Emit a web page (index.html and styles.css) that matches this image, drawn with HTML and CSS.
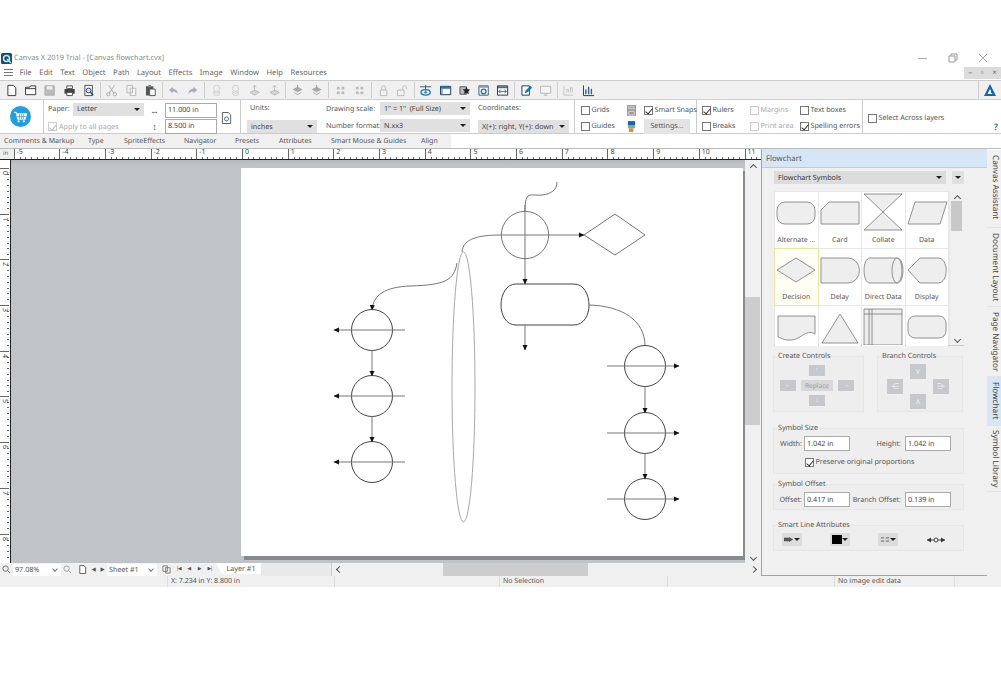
FILE: index.html
```html
<!DOCTYPE html>
<html lang="en">
<head>
<meta charset="utf-8">
<title>Canvas X 2019 Trial</title>
<link rel="stylesheet" href="styles.css">
</head>
<body>
<svg class="sprites" aria-hidden="true">
  <symbol id="i-new" viewBox="0 0 14 14"><path d="M3 1.500H9L11.500 4V12.500H3Z" fill="#fff" stroke="#333"/></symbol>
  <symbol id="i-open" viewBox="0 0 14 14"><path d="M1.500 3.500H6L7 2H12.500V11.500H1.500Z" fill="#fff" stroke="#333"/><path d="M1.500 5H12.500" stroke="#333"/></symbol>
  <symbol id="i-save" viewBox="0 0 14 14"><path d="M2 2H12V12H2Z" fill="#bbb" stroke="#aaa"/><path d="M4 2.500H10V6H4Z" fill="#eee"/></symbol>
  <symbol id="i-print" viewBox="0 0 14 14"><path d="M1.500 5.500H12.500V10.500H1.500Z" fill="#444"/><path d="M4 2H10V5H4ZM4 9H10V12.500H4Z" fill="#fff" stroke="#444"/></symbol>
  <symbol id="i-prev" viewBox="0 0 14 14"><path d="M3 1.500H11V12.500H3Z" fill="#fff" stroke="#444"/><circle cx="7" cy="7" r="2.600" fill="#cfe0f2" stroke="#247"/><path d="M9 9L12 12" stroke="#247" stroke-width="1.500"/></symbol>
  <symbol id="i-cut" viewBox="0 0 14 14"><path d="M4 1.500L9.500 10M10 1.500L4.500 10" stroke="#aaa" fill="none"/><circle cx="3.500" cy="11" r="1.800" fill="none" stroke="#aaa"/><circle cx="10.500" cy="11" r="1.800" fill="none" stroke="#aaa"/></symbol>
  <symbol id="i-copy" viewBox="0 0 14 14"><path d="M2 1.500H8V9.500H2ZM5.500 4.500H11.500V12.500H5.500Z" fill="#f4f4f4" stroke="#b5b5b5"/></symbol>
  <symbol id="i-paste" viewBox="0 0 14 14"><path d="M2 2.500H10V12.500H2Z" fill="#555"/><path d="M4.500 1H7.500V3.500H4.500Z" fill="#888"/><path d="M6 5.500H12V12.500H6Z" fill="#fff" stroke="#456"/></symbol>
  <symbol id="i-undo" viewBox="0 0 14 14"><path d="M6 3L2 6.500L6 10V8C9 8 10.500 9 11.500 11C11.500 7.500 9.500 5 6 5Z" fill="#aab"/></symbol>
  <symbol id="i-redo" viewBox="0 0 14 14"><path d="M8 3L12 6.500L8 10V8C5 8 3.500 9 2.500 11C2.500 7.500 4.500 5 8 5Z" fill="#aab"/></symbol>
  <symbol id="i-stack" viewBox="0 0 14 14"><path d="M4 3.500A3 2 0 0 1 10 3.500V6A3 2 0 0 1 4 6ZM4 8A3 2 0 0 0 10 8V10.500A3 2 0 0 1 4 10.500Z" fill="none" stroke="#ccc"/></symbol>
  <symbol id="i-up" viewBox="0 0 14 14"><path d="M7 1.500V7M5 3.500L7 1.500L9 3.500" stroke="#bbb" fill="none"/><path d="M2 9L7 6.500L12 9L7 12Z" fill="#d4d4d4" stroke="#bbb"/></symbol>
  <symbol id="i-layer" viewBox="0 0 14 14"><path d="M1.500 6L7 3L12.500 6L7 9Z" fill="#aaa"/><path d="M3 9L7 11.500L11 9" stroke="#aaa" fill="none"/><path d="M7 1V5" stroke="#999"/></symbol>
  <symbol id="i-group" viewBox="0 0 14 14"><path d="M3 3H6V6H3ZM8 3H11V6H8ZM3 8H6V11H3ZM8 8H11V11H8Z" fill="#bbb"/></symbol>
  <symbol id="i-lock" viewBox="0 0 14 14"><path d="M3.500 6.500H10.500V12.500H3.500ZM5 6.500V4A2 2 0 0 1 9 4V6.500" fill="none" stroke="#bbb"/></symbol>
  <symbol id="i-unlock" viewBox="0 0 14 14"><path d="M1.500 6.500H8.500V12.500H1.500ZM7 6.500V4A2 2 0 0 1 11 4V5.500" fill="none" stroke="#bbb"/></symbol>
  <symbol id="i-eye" viewBox="0 0 14 14"><path d="M1 3H13M7 1V7" stroke="#356"/><ellipse cx="7" cy="9" rx="5" ry="3" fill="none" stroke="#1a74b8" stroke-width="1.400"/><circle cx="7" cy="9" r="1.300" fill="#1a74b8"/></symbol>
  <symbol id="i-win" viewBox="0 0 14 14"><path d="M1.500 2.500H12.500V11.500H1.500Z" fill="#fff" stroke="#135"/><path d="M2 3H12V5H2Z" fill="#1a74b8"/><path d="M2 5H4V11H2Z" fill="#8ab"/></symbol>
  <symbol id="i-star" viewBox="0 0 14 14"><path d="M2 3H9V11H2Z" fill="#bbb" stroke="#555"/><path d="M9 3L10.200 5.600L13 6L11 8L11.500 11L9 9.500L6.500 11L7 8L5 6L7.800 5.600Z" fill="#222"/></symbol>
  <symbol id="i-target" viewBox="0 0 14 14"><path d="M2 2H12V12H2Z" fill="#fff" stroke="#356"/><path d="M2 2H12V4H2Z" fill="#89a"/><circle cx="7" cy="8" r="2.500" fill="none" stroke="#1a74b8" stroke-width="1.500"/></symbol>
  <symbol id="i-width" viewBox="0 0 14 14"><path d="M1.500 2H12.500V12H1.500Z" fill="#fff" stroke="#135"/><path d="M2 2.500H12V4.500H2Z" fill="#567"/><path d="M3 8H11M5 6L3 8L5 10M9 6L11 8L9 10" stroke="#1a74b8" fill="none"/></symbol>
  <symbol id="i-edit" viewBox="0 0 14 14"><path d="M2 2H10V12H2Z" fill="#fff" stroke="#135"/><path d="M5 10L6 7L11 2L13 4L8 9Z" fill="#1a74b8"/></symbol>
  <symbol id="i-mon" viewBox="0 0 14 14"><path d="M1.500 2.500H12.500V10H1.500ZM5 12H9M7 10V12" fill="#f4f4f4" stroke="#b5b5b5"/></symbol>
  <symbol id="i-chart0" viewBox="0 0 14 14"><path d="M2 2V12H12M5 9V6H7V9M9 9V4H11V9" fill="none" stroke="#c4c4c4"/></symbol>
  <symbol id="i-chart" viewBox="0 0 14 14"><path d="M1.500 1.500V12.500H13" fill="none" stroke="#333"/><path d="M4 6V11M7 3V11M10 5V11" stroke="#2a6a9a" stroke-width="1.500"/></symbol>
</svg>

<div class="app">
  <header class="titlebar">
    <svg class="appicon" viewBox="0 0 11 11"><rect width="11" height="11" rx="1.500" fill="#14506e"/><circle cx="5.500" cy="5.500" r="3" fill="none" stroke="#cfe4ee" stroke-width="1.500"/><path d="M6 6L10 10" stroke="#9fd" stroke-width="1.200"/></svg>
    <span class="apptitle">Canvas X 2019 Trial - [Canvas flowchart.cvx]</span>
    <div class="winbtns">
      <svg viewBox="0 0 10 10"><path d="M0 5.500H9" stroke="#aaa"/></svg>
      <svg viewBox="0 0 10 10"><path d="M1 3H7V9H1ZM3 3V1H9V7H7" fill="none" stroke="#999"/></svg>
      <svg viewBox="0 0 10 10"><path d="M1 1L9 9M9 1L1 9" stroke="#aaa"/></svg>
    </div>
  </header>

  <nav class="menubar">
    <span class="burger"></span>
    <span>File</span><span>Edit</span><span>Text</span><span>Object</span><span>Path</span><span>Layout</span><span>Effects</span><span>Image</span><span>Window</span><span>Help</span><span>Resources</span>
    <div class="docbtns"><span>–</span><span>▫</span><span>×</span></div>
  </nav>

  <div class="toolbar">
    <svg class="tb"><use href="#i-new"/></svg><svg class="tb"><use href="#i-open"/></svg><svg class="tb"><use href="#i-save"/></svg><svg class="tb"><use href="#i-print"/></svg><svg class="tb"><use href="#i-prev"/></svg>
    <i class="sep"></i>
    <svg class="tb"><use href="#i-cut"/></svg><svg class="tb"><use href="#i-copy"/></svg><svg class="tb"><use href="#i-paste"/></svg>
    <i class="sep"></i>
    <svg class="tb"><use href="#i-undo"/></svg><svg class="tb"><use href="#i-redo"/></svg>
    <i class="sep"></i>
    <svg class="tb"><use href="#i-stack"/></svg><svg class="tb"><use href="#i-stack"/></svg><svg class="tb"><use href="#i-up"/></svg><svg class="tb"><use href="#i-up"/></svg>
    <i class="sep"></i>
    <svg class="tb"><use href="#i-layer"/></svg><svg class="tb"><use href="#i-layer"/></svg>
    <i class="sep"></i>
    <svg class="tb"><use href="#i-group"/></svg><svg class="tb"><use href="#i-group"/></svg>
    <i class="sep"></i>
    <svg class="tb"><use href="#i-lock"/></svg><svg class="tb"><use href="#i-unlock"/></svg>
    <i class="sep"></i>
    <svg class="tb"><use href="#i-eye"/></svg><svg class="tb"><use href="#i-win"/></svg><svg class="tb"><use href="#i-star"/></svg><svg class="tb"><use href="#i-target"/></svg><svg class="tb"><use href="#i-width"/></svg>
    <i class="sep"></i>
    <svg class="tb"><use href="#i-edit"/></svg><svg class="tb"><use href="#i-mon"/></svg>
    <i class="sep"></i>
    <svg class="tb"><use href="#i-chart0"/></svg><svg class="tb"><use href="#i-chart"/></svg>
    <div class="logo"><svg viewBox="0 0 14 14"><path d="M7 1L13 13H1Z" fill="#1565ad"/><path d="M7 6L9.500 11H4.500Z" fill="#fff"/><circle cx="9" cy="9" r="1.200" fill="#1565ad"/></svg></div>
  </div>

  <div class="props">
    <section class="p-cart">
      <svg viewBox="0 0 22 22"><circle cx="11" cy="11" r="11" fill="#1f9ee0"/><path d="M4 6.500H6.500L8 14H16L17.500 8H7" fill="#fff" stroke="#fff" stroke-width=".8"/><path d="M10 8V14M12 8V14M14 8V14M7.500 11H16.500" stroke="#1f9ee0" stroke-width=".7"/><circle cx="9" cy="16" r="1.200" fill="#fff"/><circle cx="14.500" cy="16" r="1.200" fill="#fff"/></svg>
    </section>
    <section class="p-paper">
      <span class="lbl">Paper:</span>
      <div class="sel w71"><span>Letter</span><b></b></div>
      <span class="arrow">↔</span>
      <div class="inp w52">11.000 in</div>
      <svg class="docico" viewBox="0 0 12 14"><path d="M1.500 1H8L10.500 3.500V13H1.500Z" fill="#fff" stroke="#555"/><circle cx="6" cy="8" r="2.200" fill="none" stroke="#2a6a9a"/></svg>
      <label class="chk dim apply"><i class="cb on off"></i>Apply to all pages</label>
      <span class="arrow">↕</span>
      <div class="inp w52">8.500 in</div>
    </section>
    <section class="p-units">
      <span class="lbl">Units:</span>
      <div class="sel w70"><span>inches</span><b></b></div>
    </section>
    <section class="p-draw">
      <span class="lbl">Drawing scale:</span>
      <div class="sel w90"><span>1" = 1"  (Full Size)</span><b></b></div>
      <span class="lbl">Number format:</span>
      <div class="sel w90"><span>N.xx3</span><b></b></div>
    </section>
    <section class="p-coord">
      <span class="lbl">Coordinates:</span>
      <div class="sel w91"><span>X(+): right, Y(+): down</span><b></b></div>
    </section>
    <section class="p-grids">
      <label class="chk"><i class="cb"></i>Grids</label>
      <svg class="gico" viewBox="0 0 10 12"><path d="M0 0H10V12H0Z" fill="#999"/><path d="M1 2H9M1 4H9M2 7H8V11H2Z" stroke="#ddd" fill="none"/></svg>
      <label class="chk"><i class="cb on"></i>Smart Snaps</label>
      <label class="chk"><i class="cb"></i>Guides</label>
      <svg class="gico" viewBox="0 0 10 12"><path d="M1 0H9V5H1Z" fill="#1565ad"/><path d="M1 5H9V8H1Z" fill="#7ab"/><path d="M2 8H7V12H2Z" fill="#e8862a"/></svg>
      <div class="btn">Settings...</div>
    </section>
    <section class="p-opts">
      <label class="chk"><i class="cb on"></i>Rulers</label>
      <label class="chk dim"><i class="cb off"></i>Margins</label>
      <label class="chk"><i class="cb"></i>Text boxes</label>
      <label class="chk"><i class="cb"></i>Breaks</label>
      <label class="chk dim"><i class="cb off"></i>Print area</label>
      <label class="chk"><i class="cb on"></i>Spelling errors</label>
    </section>
    <section class="p-sel">
      <label class="chk"><i class="cb"></i>Select Across layers</label>
      <span class="help">?</span>
    </section>
  </div>

  <div class="tabstrip">
    <span class="t1">Comments &amp; Markup</span><span class="t2">Type</span><span class="t3">SpriteEffects</span><span class="t4">Navigator</span><span class="t5">Presets</span><span class="t6">Attributes</span><span class="t7">Smart Mouse &amp; Guides</span><span class="t8">Align</span>
  </div>

  <div class="main">
    <div class="work">
      <div class="hruler">
        <span class="unit">in</span>
        <div class="hticks">
          <span>-5</span><span>-4</span><span>-3</span><span>-2</span><span>-1</span><span>0</span><span>1</span><span>2</span><span>3</span><span>4</span><span>5</span><span>6</span><span>7</span><span>8</span><span>9</span><span>10</span><span>11</span>
        </div>
      </div>
      <div class="mid">
        <div class="vruler">
          <span>0</span><span>1</span><span>2</span><span>3</span><span>4</span><span>5</span><span>6</span><span>7</span><span>8</span>
        </div>
        <div class="canvas">
          <svg class="drawing" viewBox="11 160 734 403">
            <defs>
              <marker id="ah" markerWidth="6" markerHeight="6" refX="5" refY="3" orient="auto"><path d="M0 0.500L5.500 3L0 5.500Z" fill="#111"/></marker>
            </defs>
            <rect x="244" y="171" width="503" height="389" fill="#858b8f"/>
            <rect x="241" y="168" width="502" height="388" fill="#fff"/>
            <g fill="none" stroke="#767676" stroke-width="1">
              <path d="M525 211C525 190 530 196 542 195C551 194 557 190 557 182"/>
              <circle cx="525" cy="235" r="23.700"/>
              <path d="M525 205V284" marker-end="url(#ah)"/>
              <path d="M501 235H584" marker-end="url(#ah)"/>
              <path d="M584 235L615 214L645 235L615 255Z"/>
              <path d="M501 235C480 235 463 238 462 252"/>
              <path d="M457 263C454 280 446 285 410 286C385 287 373 295 372 310" marker-end="url(#ah)"/>
              <ellipse cx="463.500" cy="387" rx="11.500" ry="135" stroke="#a8a8a8"/>
              <path d="M516 284H574C584 284 589 295 589 305C589 315 584 325 574 325H516C506 325 501 315 501 305C501 295 506 284 516 284Z" stroke="#444"/>
              <path d="M525 325V350" marker-end="url(#ah)"/>
              <path d="M589 305C622 306 645 320 645 346"/>
              <circle cx="372" cy="330" r="20.500" stroke="#444"/>
              <circle cx="372" cy="396" r="20.500" stroke="#444"/>
              <circle cx="372" cy="462" r="20.500" stroke="#444"/>
              <path d="M405 330H334" marker-end="url(#ah)"/>
              <path d="M405 396H334" marker-end="url(#ah)"/>
              <path d="M405 462H334" marker-end="url(#ah)"/>
              <path d="M372 350V376" marker-end="url(#ah)"/>
              <path d="M372 416V442" marker-end="url(#ah)"/>
              <circle cx="645" cy="366" r="20.500" stroke="#444"/>
              <circle cx="645" cy="433" r="20.500" stroke="#444"/>
              <circle cx="645" cy="499" r="20.500" stroke="#444"/>
              <path d="M607 366H679" marker-end="url(#ah)"/>
              <path d="M607 433H679" marker-end="url(#ah)"/>
              <path d="M607 499H679" marker-end="url(#ah)"/>
              <path d="M645 386V413" marker-end="url(#ah)"/>
              <path d="M645 453V479" marker-end="url(#ah)"/>
            </g>
          </svg>
        </div>
        <div class="vscroll"><em class="up"></em><div class="vthumb"></div><em class="down"></em></div>
      </div>
      <div class="bottombar">
        <svg class="sm" viewBox="0 0 10 10"><circle cx="4" cy="4" r="3" fill="none" stroke="#666"/><path d="M6 6L9 9" stroke="#666"/></svg>
        <div class="combo w48">97.08%<u></u></div>
        <svg class="sm" viewBox="0 0 10 10"><circle cx="4" cy="4" r="3" fill="none" stroke="#999"/><path d="M6 6L9 9" stroke="#999"/></svg>
        <svg class="sm ml" viewBox="0 0 10 10"><path d="M2 .5H6.500L8.500 2.500V9.500H2Z" fill="#fff" stroke="#555"/></svg>
        <span class="nav">◀</span><span class="nav">▶</span>
        <div class="combo w50">Sheet #1<u></u></div>
        <svg class="sm" viewBox="0 0 10 10"><path d="M1 1H6V7H1ZM4 3H9V9H4Z" fill="#f4f4f4" stroke="#777"/></svg>
        <span class="nav d">|◀</span><span class="nav d">◀</span><span class="nav d">▶</span><span class="nav d">▶|</span>
        <div class="layertab">Layer #1</div>
        <div class="layerfill"></div>
        <div class="hscroll"><em class="left"></em><div class="hthumb"></div><em class="right"></em></div>
      </div>
    </div>

    <aside class="panel">
      <div class="phead">Flowchart</div>
      <div class="pselrow">
        <div class="sel w172"><span>Flowchart Symbols</span><b></b></div>
        <div class="sel w12"><b></b></div>
      </div>
      <div class="symwrap">
        <div class="symgrid">
          <figure><svg viewBox="0 0 42 38"><rect x="2" y="9" width="38" height="22" rx="8"/></svg><figcaption>Alternate ...</figcaption></figure>
          <figure><svg viewBox="0 0 42 38"><path d="M2 17L10 9H40V31H2Z"/></svg><figcaption>Card</figcaption></figure>
          <figure><svg viewBox="0 0 42 38"><path d="M2 1H40L2 37H40Z"/></svg><figcaption>Collate</figcaption></figure>
          <figure><svg viewBox="0 0 42 38"><path d="M9 9H41L34 31H2Z"/></svg><figcaption>Data</figcaption></figure>
          <figure class="sel-card"><svg viewBox="0 0 42 38"><path d="M2 20L21 8L40 20L21 32Z"/></svg><figcaption>Decision</figcaption></figure>
          <figure><svg viewBox="0 0 42 38"><path d="M2 8H29A11.500 12.500 0 0 1 29 33H2Z"/></svg><figcaption>Delay</figcaption></figure>
          <figure><svg viewBox="0 0 42 38"><path d="M8 8H35C43 8 43 33 35 33H8C0 33 0 8 8 8Z"/><ellipse cx="35" cy="20.500" rx="5" ry="12.500"/></svg><figcaption>Direct Data</figcaption></figure>
          <figure><svg viewBox="0 0 42 38"><path d="M2 20L14 8H32C43 8 43 33 32 33H14Z"/></svg><figcaption>Display</figcaption></figure>
          <figure><svg viewBox="0 0 42 38"><path d="M3 9H40V27C30 21 26 34 14 33C8 33 6 31 3 30Z"/></svg></figure>
          <figure><svg viewBox="0 0 42 38"><path d="M21 7L39 36H3Z"/></svg></figure>
          <figure><svg viewBox="0 0 42 38"><path d="M2 2H40V38H2ZM2 7H40M7 2V38M10 2V38"/></svg></figure>
          <figure><svg viewBox="0 0 42 38"><rect x="2" y="9" width="38" height="22" rx="7"/></svg></figure>
        </div>
        <div class="symscroll"><em class="up"></em><div class="symthumb"></div><em class="down"></em></div>
      </div>

      <div class="ctlrow">
        <fieldset class="gb create">
          <legend>Create Controls</legend>
          <div class="cgrid">
            <span class="cbtn c-t">↑</span>
            <span class="cbtn c-l">←</span>
            <span class="cbtn c-m">Replace</span>
            <span class="cbtn c-r">→</span>
            <span class="cbtn c-b">↓</span>
          </div>
        </fieldset>
        <fieldset class="gb branch">
          <legend>Branch Controls</legend>
          <div class="bgrid">
            <span class="bbtn b-t">⋎</span>
            <span class="bbtn b-l">⋲</span>
            <span class="bbtn b-r">⋺</span>
            <span class="bbtn b-b">⋏</span>
          </div>
        </fieldset>
      </div>

      <fieldset class="gb size">
        <legend>Symbol Size</legend>
        <div class="frow">
          <span class="flbl f1">Width:</span><div class="inp w46">1.042 in</div>
          <span class="flbl f2">Height:</span><div class="inp w46">1.042 in</div>
        </div>
        <label class="chk pres"><i class="cb on"></i>Preserve original proportions</label>
      </fieldset>

      <fieldset class="gb offset">
        <legend>Symbol Offset</legend>
        <div class="frow">
          <span class="flbl f1">Offset:</span><div class="inp w46">0.417 in</div>
          <span class="flbl f2">Branch Offset:</span><div class="inp w46">0.139 in</div>
        </div>
      </fieldset>

      <fieldset class="gb smart">
        <legend>Smart Line Attributes</legend>
        <div class="attrs">
          <span class="abtn"><svg viewBox="0 0 12 8"><path d="M0 2H6V6H0ZM6 1L11 4L6 7Z" fill="#555"/></svg><b></b></span>
          <span class="abtn w20"><i class="swatch"></i><b></b></span>
          <span class="abtn lite"><svg viewBox="0 0 12 8"><path d="M1 1H5V3H1ZM7 1H11V3H7ZM1 5H5V7H1ZM7 5H11V7H7Z" fill="#999"/></svg><b></b></span>
          <svg class="arrows" viewBox="0 0 18 8"><path d="M0 4H18" stroke="#444"/><path d="M0 4L4 1.500V6.500ZM18 4L14 1.500V6.500Z" fill="#333"/><circle cx="9" cy="4" r="2" fill="#eee" stroke="#444"/></svg>
        </div>
      </fieldset>
    </aside>

    <div class="vtabs">
      <span class="v1">Canvas Assistant</span>
      <span class="v2">Document Layout</span>
      <span class="v3">Page Navigator</span>
      <span class="v4 act">Flowchart</span>
      <span class="v5">Symbol Library</span>
    </div>
  </div>

  <footer class="status">
    <span class="s1"></span>
    <span class="s2">X: 7.234 in Y: 8.800 in</span>
    <span class="s3"></span>
    <span class="s4">No Selection</span>
    <span class="s5"></span>
    <span class="s6">No image edit data</span>
    <span class="s7"></span>
  </footer>
</div>
</body>
</html>
```

FILE: styles.css
```css
* { box-sizing: border-box; }
html, body { margin: 0; padding: 0; background: #fff; }
body { width: 1001px; height: 674px; overflow: hidden; font: 7.2px "Noto Sans", "Open Sans", sans-serif; color: #555; text-rendering: geometricPrecision; }
.sprites { display: none; }
.app { margin-top: 51px; width: 1001px; height: 536px; display: flex; flex-direction: column; }

.titlebar { height: 14px; display: flex; align-items: center; padding-left: 1px; }
.appicon { width: 11px; height: 11px; }
.apptitle { margin-left: 2px; color: #8a8a8a; font-size: 7.400px; }
.winbtns { margin-left: auto; display: flex; gap: 20px; padding-right: 13px; }
.winbtns svg { width: 10px; height: 10px; }

.menubar { height: 15px; display: flex; align-items: center; padding-left: 4px; gap: 7.500px; color: #666; font-size: 7.600px; background: #fff; }
.burger { width: 9px; height: 7px; margin-right: -1px; border-top: 1px solid #777; border-bottom: 1px solid #777; background: linear-gradient(#777,#777) center/100% 1px no-repeat; }
.docbtns { margin-left: auto; width: 37px; height: 12px; background: #dcdcdc; display: flex; justify-content: space-around; align-items: center; color: #666; font-size: 8px; line-height: 1; }

.toolbar { height: 20px; background: #f0f0f0; border-top: 1px solid #ccc; border-bottom: 1px solid #d0d0d0; display: flex; align-items: center; padding-left: 2px; }
.tb { width: 19.200px; height: 13px; flex: none; }
.sep { width: 1px; height: 16px; background: #ccc; margin: 0 1.700px; flex: none; }
.logo { margin-left: auto; width: 23px; height: 19px; border-left: 1px solid #ccc; display: flex; align-items: center; justify-content: center; }
.logo svg { width: 14px; height: 14px; }

.props { height: 34px; display: flex; background: #fff; border-bottom: 1px solid #ccc; }
.props section { height: 100%; flex: none; }
.lbl { color: #555; white-space: nowrap; }
.sel { height: 13px; background: #e0e0e0; display: flex; align-items: center; justify-content: space-between; padding: 0 4px; color: #444; white-space: pre; }
.sel b, .abtn b { width: 0; height: 0; border: 3px solid transparent; border-top: 3.500px solid #222; border-bottom: 0; flex: none; }
.w71 { width: 71px; } .w70 { width: 70px; } .w90 { width: 90px; } .w91 { width: 91px; }
.inp { height: 15px; background: #fff; border: 1px solid #aaa; padding: 0 2px; color: #444; display: flex; align-items: center; }
.w52 { width: 52px; } .w46 { width: 46px; }
.arrow { color: #555; font-size: 9px; text-align: center; line-height: 1; }
.chk { display: flex; align-items: center; gap: 1.500px; color: #555; white-space: nowrap; }
.chk.dim { color: #aaa; }
.cb { width: 9px; height: 9px; border: 1px solid #777; background: #fff; display: block; position: relative; flex: none; }
.cb.off { border-color: #ccc; }
.cb.on::after { content: ""; position: absolute; left: 2px; top: 0; width: 3px; height: 6px; border: solid #333; border-width: 0 1px 1px 0; transform: rotate(40deg); }
.cb.on.off::after { border-color: #bbb; }

.p-cart { width: 44px; display: flex; align-items: center; padding-left: 10px; border-right: 1px solid #ccc; }
.p-cart svg { width: 21px; height: 21px; }
.p-paper { width: 197px; display: grid; grid-template-columns: 25px 71px 21px 52px 20px; grid-template-rows: 16px 16px; align-items: center; padding: 2px 0 0 4px; border-right: 1px solid #ccc; }
.p-paper .sel { margin-top: -2px; }
.p-paper .lbl { margin-top: -3px; }
.p-paper .apply { grid-column: 1 / 3; gap: 2px; margin-top: 1px; }
.docico { grid-row: 1 / 3; grid-column: 5; width: 11px; height: 14px; margin-left: 4px; }
.p-units { width: 79px; padding: 3px 0 0 6px; display: flex; flex-direction: column; gap: 4px; }
.p-units .lbl { padding-left: 3px; height: 13px; line-height: 11px; }
.p-draw { width: 152px; display: grid; grid-template-columns: 54px 90px; grid-template-rows: 17px 17px; align-items: center; padding-left: 6px; }
.p-coord { width: 103px; padding: 3px 0 0 6px; display: flex; flex-direction: column; gap: 4px; border-right: 1px solid #ccc; }
.p-coord .lbl { height: 13px; line-height: 11px; }
.p-grids { width: 122px; display: grid; grid-template-columns: 46px 17px 55px; grid-template-rows: 16px 16px; align-items: center; padding: 2px 0 0 6px; border-right: 1px solid #ccc; }
.gico { width: 9px; height: 11px; }
.btn { width: 46px; height: 15px; background: #e4e4e4; display: flex; align-items: center; justify-content: center; color: #555; }
.p-opts { width: 166px; display: grid; grid-template-columns: 48px 50px 60px; grid-template-rows: 16px 16px; align-items: center; padding: 2px 0 0 5px; border-right: 1px solid #ccc; }
.p-sel { flex: 1 !important; display: flex; align-items: center; padding: 3px 0 0 5px; position: relative; }
.help { position: absolute; right: 3px; bottom: 0; color: #2a6a9a; font-size: 9px; font-weight: 600; }

.tabstrip { height: 14px; padding-top: 1px; display: flex; align-items: center; background: linear-gradient(#f0f0f0,#f0f0f0) 0 0/451px 100% no-repeat; font-size: 7.000px; color: #555; white-space: nowrap; }
.tabstrip span { flex: none; }
.t1 { width: 88px; padding-left: 4px; } .t2 { width: 36px; } .t3 { width: 60px; } .t4 { width: 51px; } .t5 { width: 44px; } .t6 { width: 52px; } .t7 { width: 90px; } .t8 { width: 30px; }

.main { height: 428px; display: flex; border-top: 1px solid #bbb; }
.work { width: 761px; display: flex; flex-direction: column; }
.hruler { height: 11px; display: flex; background: #fff; border-bottom: 1px solid #222; overflow: hidden; flex: none; }
.unit { width: 13.500px; flex: none; font-size: 6px; color: #666; padding-left: 3px; line-height: 9px; background: #eee; }
.hticks { display: flex; flex: none; }
.hticks span { width: 45.700px; flex: none; font-size: 7px; line-height: 8px; padding-left: 2px; color: #444; border-left: 1px solid #666;
  background: repeating-linear-gradient(90deg, transparent 0 4.710px, #666 4.710px 5.710px) 0 100%/100% 2px no-repeat; }
.mid { height: 403px; display: flex; flex: none; }
.vruler { width: 11px; padding-top: 8px; border-right: 1px solid #222; background: #fff; overflow: hidden; flex: none; }
.vruler span { display: block; height: 45.700px; writing-mode: vertical-rl; font-size: 7px; line-height: 9px; padding-top: 2px; color: #444; border-top: 1px solid #666;
  background: repeating-linear-gradient(180deg, transparent 0 4.710px, #666 4.710px 5.710px) 100% 0/2px 100% no-repeat; }
.canvas { width: 734px; height: 403px; background: linear-gradient(#b4b8bc 0, #c1c4c7 6px); flex: none; }
.drawing { display: block; width: 734px; height: 403px; }
.vscroll { width: 16px; background: #f0f0f0; display: flex; flex-direction: column; flex: none; position: relative; }
.vscroll .vthumb { position: absolute; left: 0; right: 1px; top: 137px; height: 128px; background: #cdcdcd; }
em { display: block; flex: none; width: 5px; height: 5px; border: solid #555; border-width: 1px 0 0 1px; }
em.up { transform: rotate(45deg); margin: 5px auto 0; }
em.down { transform: rotate(225deg); margin: auto auto 3px; }
em.left { transform: rotate(-45deg); margin: auto 0 auto 5px; }
em.right { transform: rotate(135deg); margin: auto 5px auto auto; }

.bottombar { height: 13px; display: flex; align-items: center; background: #f0f0f0; flex: none; position: relative; }
.sm { width: 9px; height: 9px; margin: 0 2px; flex: none; }
.sm.ml { margin-left: 4px; }
.combo { height: 12px; background: #fff; display: flex; align-items: center; justify-content: space-between; padding: 0 4px 0 2px; color: #555; flex: none; position: relative; }
.combo u { width: 4px; height: 4px; border: solid #777; border-width: 0 1px 1px 0; transform: rotate(45deg); margin-top: -2px; }
.w48 { width: 48px; } .w50 { width: 50px; margin-right: 3px; }
.nav { font-size: 5.500px; color: #555; width: 9px; text-align: center; flex: none; line-height: 1; white-space: nowrap; }
.nav.d { width: 10.500px; font-size: 5px; letter-spacing: -1px; }
.layertab { height: 11px; width: 45px; margin-left: 1px; margin-top: -2px; background: #fff; clip-path: polygon(0 0, 100% 0, 100% 100%, 14% 100%); display: flex; align-items: center; justify-content: center; padding-left: 5px; flex: none; }
.layerfill { width: 71px; height: 13px; background: #e9e9e9; border-right: 1px solid #ccc; flex: none; }
.hscroll { flex: 1; height: 13px; background: #f0f0f0; display: flex; align-items: center; position: relative; }
.hthumb { position: absolute; left: 111px; top: 0; width: 145px; height: 13px; background: #cdcdcd; }

.panel { width: 226px; background: #f0f0f0; border-left: 1px solid #8fa8bd; border-bottom: 1px solid #8fa8bd; flex: none; display: flex; flex-direction: column; }
.phead { height: 19px; padding: 1px 0 0 4px; background: #d6e6f6; border-bottom: 1px solid #bcd; display: flex; align-items: center; font-size: 7.800px; color: #555; flex: none; }
.pselrow { display: flex; justify-content: flex-start; gap: 6px; padding: 3px 0 0 12px; flex: none; }
.w172 { width: 172px; background: #dcdcdc; color: #333; font-size: 7.200px; }
.w12 { width: 12px; padding: 0 3px; }
.symwrap { margin: 7px 0 0 12px; width: 190px; height: 155px; display: flex; background: #e8e8e8; flex: none; border-bottom: 1px solid #ccc; }
.symgrid { width: 176px; height: 155px; padding: 1px; display: grid; grid-template-columns: repeat(4, 42.500px); grid-auto-rows: 56px; gap: 1px; overflow: hidden; }
.symgrid figure { margin: 0; background: #fff; display: flex; flex-direction: column; align-items: center; padding-top: 1px; }
.symgrid svg { width: 42px; height: 38px; flex: none; }
.symgrid svg * { fill: #eee; stroke: #777; stroke-width: 0.800; }
.symgrid figcaption { font-size: 7px; margin-top: 5px; white-space: nowrap; color: #555; }
.symgrid .sel-card { background: #fffef4; outline: 1px solid #f0e3a0; }
.symscroll { width: 14px; background: #f0f0f0; display: flex; flex-direction: column; position: relative; }
.symthumb { position: absolute; top: 10px; left: 1px; width: 11px; height: 30px; background: #c8c8c8; }

.gb { margin: 0; padding: 0; border: 1px solid #e6e6e6; background: #eeeeee; min-width: 0; }
.gb legend { margin-left: 4px; padding: 0; color: #555; line-height: 9px; font-size: 7.200px; }
.ctlrow { display: flex; gap: 13px; margin: 6px 0 0 11px; flex: none; }
.create { width: 91px; height: 60px; }
.branch { width: 86px; height: 60px; }
.cgrid { display: grid; grid-template-columns: 16px 5px 8px 16px 8px 5px 16px; grid-template-rows: 11px 4px 11px 4px 11px; padding: 4px 0 0 6px; }
.cbtn { background: #c6c8cc; color: #f2f2f2; font-size: 7px; line-height: 11px; text-align: center; }
.c-t { grid-area: 1 / 4; } .c-l { grid-area: 3 / 1; } .c-m { grid-area: 3 / 3 / 4 / 6; background: #d8d8d8; color: #9a9a9a; font-size: 6.600px; } .c-r { grid-area: 3 / 7; } .c-b { grid-area: 5 / 4; }
.bgrid { display: grid; grid-template-columns: repeat(3, 16px); grid-template-rows: repeat(3, 15px); padding: 3px 0 0 9px; gap: 0 7px; }
.bbtn { background: #c6c8cc; color: #eee; text-align: center; font-size: 8px; line-height: 15px; }
.b-t { grid-area: 1 / 2; } .b-l { grid-area: 2 / 1; } .b-r { grid-area: 2 / 3; } .b-b { grid-area: 3 / 2; }
.size { width: 191px; height: 50px; margin: 12px 0 0 11px; flex: none; }
.offset { width: 191px; height: 30px; margin: 6px 0 0 11px; flex: none; }
.smart { width: 191px; height: 30px; margin: 11px 0 0 11px; flex: none; }
.frow { display: flex; align-items: center; height: 15px; margin-top: 3px; }
.flbl { text-align: right; white-space: nowrap; flex: none; }
.frow .f1 { width: 28px; margin-right: 2px; }
.frow .f2 { width: 51px; margin: 0 4px 0 0; }
.frow .inp { flex: none; }
.pres { margin: 6px 0 0 31px; }
.attrs { display: flex; align-items: center; padding: 3px 0 0 8px; }
.abtn { width: 20px; height: 13px; background: #dcdcdc; display: flex; align-items: center; justify-content: space-between; padding: 0 2px; flex: none; }
.abtn svg { width: 10px; height: 7px; flex: none; }
.abtn + .abtn { margin-left: 28px; }
.abtn.lite + .arrows { margin-left: 29px; }
.swatch { width: 10px; height: 9px; background: #000; display: block; }
.arrows { width: 18px; height: 8px; flex: none; }

.vtabs { flex: 1; background: #f0f0f0; display: flex; flex-direction: column; border-top: 1px solid #fff; }
.vtabs span { writing-mode: vertical-rl; font-size: 8.200px; color: #444; padding-left: 1px; flex: none; white-space: nowrap; border-bottom: 1px solid #e3e3e3; display: block; }
.v1 { height: 78px; padding-top: 5px; }
.v2 { height: 79px; padding-top: 5px; }
.v3 { height: 70px; padding-top: 5px; }
.v4 { height: 49px; padding-top: 5px; background: #d6e6f6; }
.v5 { height: 66px; padding-top: 4px; }

.status { height: 11px; background: #f0f0f0; display: flex; align-items: center; color: #555; font-size: 7px; flex: none; }
.status span { height: 11px; line-height: 11px; border-right: 1px solid #ddd; flex: none; padding-left: 3px; white-space: nowrap; }
.s1 { width: 168px; } .s2 { width: 167px; } .s3 { width: 165px; padding-left: 0; } .s4 { width: 168px; } .s5 { width: 167px; } .s6 { width: 120px; } .s7 { width: 46px; border-right: 0 !important; }
```
